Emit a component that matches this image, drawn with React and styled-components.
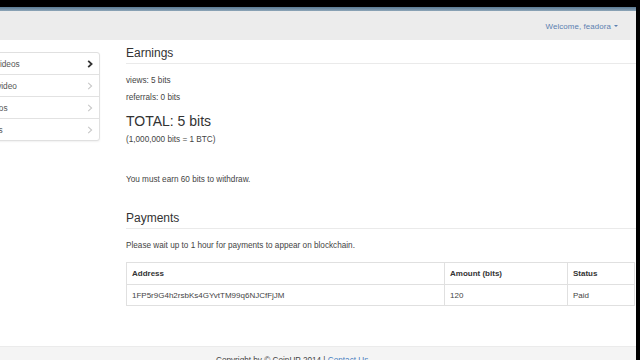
import React from 'react';
import styled, { createGlobalStyle } from 'styled-components';

const GlobalStyle = createGlobalStyle`
  html, body {
    margin: 0;
    padding: 0;
    background: #000;
  }
  body {
    font-family: "Liberation Sans", Arial, sans-serif;
    color: #333;
  }
`;

const menu = [
  { label: 'Watch Videos', active: true },
  { label: 'Submit video' },
  { label: 'My Videos' },
  { label: 'Referrals' },
];

const payments = [
  { address: '1FP5r9G4h2rsbKs4GYvtTM99q6NJCfFjJM', amount: 120, status: 'Paid' },
];

const Chevron = ({ dark }) => (
  <svg width="6" height="8" viewBox="0 0 6 8">
    <path
      d="M1.2 0.8 L4.6 4 L1.2 7.2"
      fill="none"
      stroke={dark ? '#333' : '#c8c8c8'}
      strokeWidth={dark ? 1.8 : 1.1}
    />
  </svg>
);

const App = () => {
  return (
    <Frame>
      <GlobalStyle />
      <Page>
        <TopLine />
        <Navbar>
          <Welcome>
            Welcome, feadora <Caret />
          </Welcome>
        </Navbar>
        <Content>
          <Sidebar>
            {menu.map((item) => (
              <MenuItem key={item.label}>
                <span>{item.label}</span>
                <Chevron dark={item.active} />
              </MenuItem>
            ))}
          </Sidebar>
          <Main>
            <Heading>Earnings</Heading>
            <Text top={11}>views: 5 bits</Text>
            <Text top={5}>referrals: 0 bits</Text>
            <Total>TOTAL: 5 bits</Total>
            <Text top={5}>(1,000,000 bits = 1 BTC)</Text>
            <Text top={28}>You must earn 60 bits to withdraw.</Text>
            <Heading top={26}>Payments</Heading>
            <Text top={11}>Please wait up to 1 hour for payments to appear on blockchain.</Text>
            <Table>
              <thead>
                <tr>
                  <Th width={318}>Address</Th>
                  <Th width={123}>Amount (bits)</Th>
                  <Th>Status</Th>
                </tr>
              </thead>
              <tbody>
                {payments.map((p) => (
                  <tr key={p.address}>
                    <Td>{p.address}</Td>
                    <Td>{p.amount}</Td>
                    <Td>{p.status}</Td>
                  </tr>
                ))}
              </tbody>
            </Table>
          </Main>
        </Content>
        <Footer>
          Copyright by © CoinUP 2014 | <FooterLink>Contact Us</FooterLink>
        </Footer>
      </Page>
    </Frame>
  );
};

export default App;

const Frame = styled.div`
  width: 640px;
  height: 360px;
  box-sizing: border-box;
  padding: 7px 4px 0 0;
  background: #000;
  overflow: hidden;
`;

const Page = styled.div`
  width: 636px;
  background: #fff;
  display: flex;
  flex-direction: column;
`;

const TopLine = styled.div`
  height: 4px;
  background: linear-gradient(to bottom, #5a7a92, #8ea6b8);
`;

const Navbar = styled.div`
  height: 29px;
  background: #ececec;
  display: flex;
  align-items: center;
  justify-content: flex-end;
  padding-right: 18px;
`;

const Welcome = styled.div`
  font-size: 7.9px;
  letter-spacing: 0.1px;
  color: #5b7fb0;
  display: flex;
  align-items: center;
  gap: 3px;
  margin-top: 1px;
`;

const Caret = styled.span`
  width: 0;
  height: 0;
  border-left: 2.5px solid transparent;
  border-right: 2.5px solid transparent;
  border-top: 2.5px solid #5b7fb0;
`;

const Content = styled.div`
  display: flex;
  align-items: flex-start;
  padding-bottom: 40px;
`;

const Sidebar = styled.div`
  width: 142px;
  flex-shrink: 0;
  margin-left: -42px;
  margin-top: 12px;
  border: 1px solid #e0e0e0;
  border-radius: 3px;
  box-shadow: 0 1px 2px rgba(0, 0, 0, 0.06);
  box-sizing: border-box;
  background: #fff;
`;

const MenuItem = styled.div`
  height: 21px;
  display: flex;
  align-items: center;
  justify-content: space-between;
  padding: 0 6px 0 10px;
  font-size: 8.3px;
  color: #555;
  & + & {
    border-top: 1px solid #e2e2e2;
  }
`;

const Main = styled.div`
  flex: 1;
  margin-left: 26px;
  padding-top: 7px;
  min-width: 0;
`;

const Heading = styled.h3`
  margin: ${(p) => p.top || 0}px 0 0;
  padding-bottom: 3px;
  font-size: 12px;
  line-height: 13px;
  font-weight: normal;
  color: #333;
  border-bottom: 1px solid #eaeaea;
`;

const Text = styled.p`
  margin: ${(p) => p.top || 0}px 0 0;
  font-size: 8.2px;
  line-height: 12px;
  color: #444;
`;

const Total = styled.div`
  margin-top: 9px;
  font-size: 14px;
  line-height: 16px;
  color: #333;
`;

const Table = styled.table`
  margin-top: 10px;
  width: 509px;
  border-collapse: collapse;
  border: 1px solid #e0e0e0;
  font-size: 8px;
  color: #444;
`;

const Th = styled.th`
  width: ${(p) => (p.width ? `${p.width}px` : 'auto')};
  height: 22px;
  padding: 0 5px;
  text-align: left;
  font-weight: bold;
  color: #333;
  border: 1px solid #e0e0e0;
  box-sizing: border-box;
`;

const Td = styled.td`
  height: 21px;
  padding: 0 5px;
  border: 1px solid #e0e0e0;
  box-sizing: border-box;
`;

const Footer = styled.div`
  height: 30px;
  background: #f4f4f4;
  border-top: 1px solid #ebebeb;
  padding: 8px 0 0 216px;
  box-sizing: border-box;
  font-size: 8.2px;
  line-height: 12px;
  color: #444;
`;

const FooterLink = styled.span`
  color: #4a7fc1;
`;
